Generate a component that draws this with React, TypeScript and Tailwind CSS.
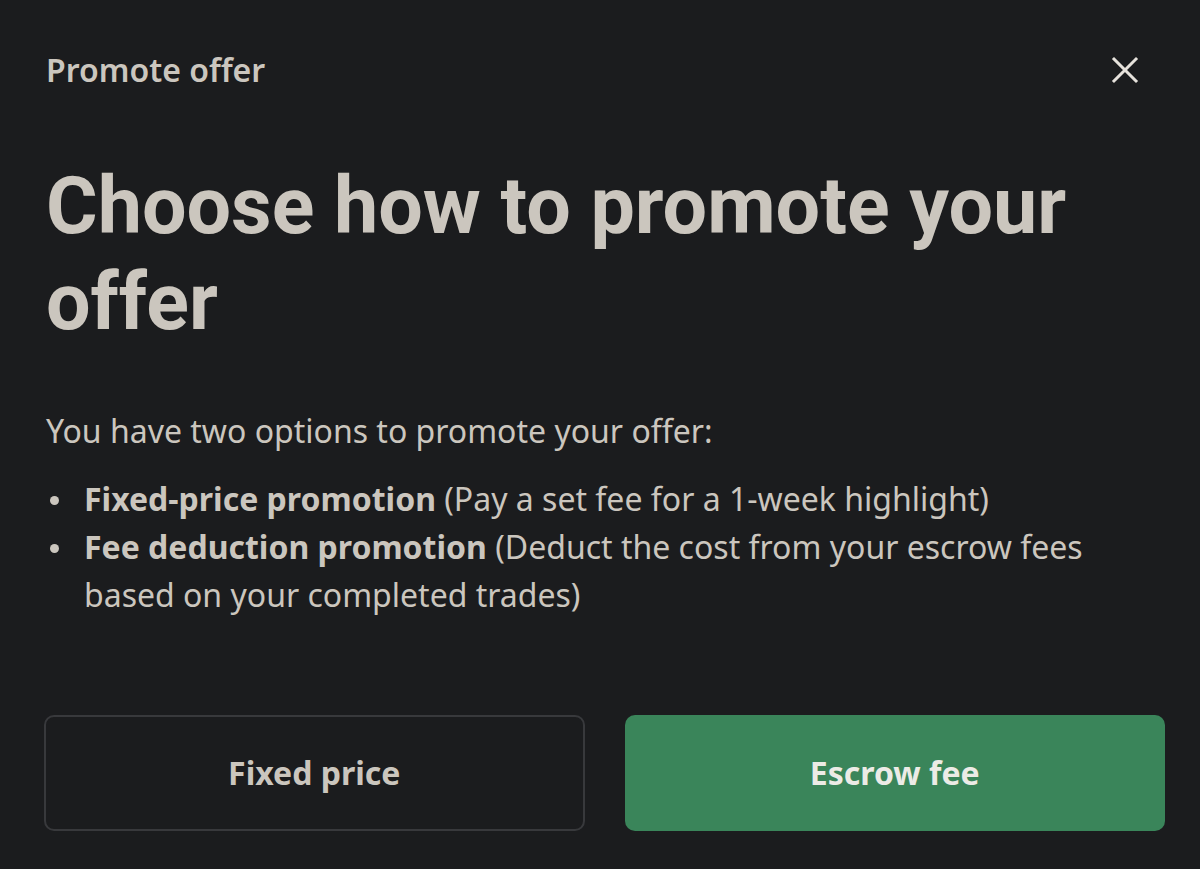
import React from 'react';

const font = { fontFamily: '"Noto Sans", Roboto, Arial, sans-serif' };
const headingFont = { fontFamily: 'Roboto, "Noto Sans", Arial, sans-serif' };

const Bullet: React.FC<{ title: string; children: React.ReactNode }> = ({ title, children }) => (
    <li className="flex">
        <span className="w-[38px] shrink-0 h-[48px] flex items-center">
            <span className="ml-[4px] mt-[2px] w-[9px] h-[9px] rounded-full bg-[#cbc6be]" />
        </span>
        <span><b className="font-bold">{title}</b> {children}</span>
    </li>
);

const App: React.FC = () => {
    return (
        <div className="w-[1200px] h-[869px] bg-[#1b1c1e] text-[#cbc6be] overflow-hidden" style={font}>
            <div className="pl-[44px] pr-[35px] pt-[44px]">
                {/* Header */}
                <div className="flex items-center justify-between">
                    <h2 className="pl-[2px] text-[32px] leading-[52px] font-semibold">Promote offer</h2>
                    <button className="w-[52px] h-[52px] flex items-center justify-center mr-[14px]" aria-label="Close">
                        <svg width="28" height="28" viewBox="0 0 28 28" fill="none" stroke="#e6e2dc" strokeWidth="3" strokeLinecap="square">
                            <path d="M3 3 L25 25 M25 3 L3 25" />
                        </svg>
                    </button>
                </div>

                {/* Title */}
                <h1 className="mt-[62px] pl-[2px] text-[79px] leading-[96px] font-bold" style={headingFont}>
                    Choose how to promote your offer
                </h1>

                {/* Body */}
                <div className="mt-[57px] pl-[2px] text-[32px] leading-[48px] font-normal">
                    <p>You have two options to promote your offer:</p>
                    <ul className="mt-[20px]">
                        <Bullet title="Fixed-price promotion">(Pay a set fee for a 1-week highlight)</Bullet>
                        <Bullet title="Fee deduction promotion">(Deduct the cost from your escrow fees based on your completed trades)</Bullet>
                    </ul>
                </div>

                {/* Actions */}
                <div className="mt-[96px] grid grid-cols-2 gap-[40px]">
                    <button className="h-[116px] rounded-[10px] border-2 border-[#38393c] text-[32px] font-bold text-[#cbc6be]">
                        Fixed price
                    </button>
                    <button className="h-[116px] rounded-[10px] bg-[#3a855a] text-[32px] font-bold text-[#ecebe6]">
                        Escrow fee
                    </button>
                </div>
            </div>
        </div>
    );
};

export default App;
